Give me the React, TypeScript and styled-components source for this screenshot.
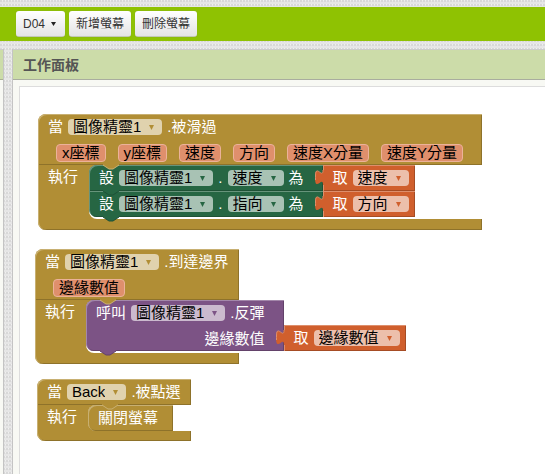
import React from "react";
import styled, { createGlobalStyle, css } from "styled-components";

interface Tone {
  base: string;
  light: string;
  dark: string;
  field: string;
}

const gold: Tone = { base: "#b18e35", light: "#c8b072", dark: "#8e722a", field: "#e0d2ae" };
const green: Tone = { base: "#266643", light: "#67947b", dark: "#1e5236", field: "#a8c2b4" };
const orange: Tone = { base: "#d05f2d", light: "#de8f6c", dark: "#a64c24", field: "#ecbfab" };
const purple: Tone = { base: "#7c5385", light: "#a387aa", dark: "#63426a", field: "#cbbace" };

const GlobalStyle = createGlobalStyle`
  * { box-sizing: border-box; }
  body {
    margin: 0;
    font-family: "Liberation Sans", "Noto Sans CJK TC", sans-serif;
    background-color: #e6e6e6;
    background-image:
      radial-gradient(circle at 1px 1px, #d8d8d8 1px, transparent 1px),
      linear-gradient(#f0f0f0 1px, transparent 1px);
    background-size: 3px 4px, 100% 4px;
  }
`;

const Page = styled.div`
  display: flex;
  flex-direction: column;
  min-height: 100vh;
  padding-top: 7px;
  gap: 8px;
  overflow: hidden;
`;

const Toolbar = styled.header`
  display: flex;
  align-items: center;
  gap: 4px;
  height: 34px;
  padding: 0 16px;
  background: #8fc202;
`;

const ToolButton = styled.button`
  display: flex;
  align-items: center;
  gap: 6px;
  height: 26px;
  padding: 0 7px;
  border: 1px solid #c3c9b4;
  border-width: 0 0 1px;
  border-radius: 3px;
  background: linear-gradient(#ffffff, #e4e4e4);
  box-shadow: 0 0 1px #7d8f4b;
  color: #333;
  font: 12px/16px "Liberation Sans", "Noto Sans CJK TC", sans-serif;
  white-space: nowrap;
`;

const MenuCaret = styled.svg`
  width: 5px;
  height: 4px;
  margin-right: 2px;
  fill: #222;
`;

const Columns = styled.main`
  flex: 1;
  display: flex;
  gap: 8px;
`;

const SidePanel = styled.aside`
  flex: 0 0 4px;
  border-right: 1px solid #c4c4c4;
  background: #f8f9f4;
`;

const SideHeading = styled.div`
  height: 31px;
  border-top: 1px solid #ccc;
  border-bottom: 1px solid #a9b191;
  background: #ccdca9;
`;

const WorkPanel = styled.section`
  flex: 1;
  display: flex;
  flex-direction: column;
  border-left: 1px solid #c4c4c4;
  background: #f8f9f4;
`;

const PanelHeading = styled.h1`
  height: 31px;
  margin: 0;
  padding: 0 10px;
  border-top: 1px solid #ccc;
  border-bottom: 1px solid #a9ad9f;
  background: #ccdca9;
  color: #555;
  font: bold 14px/30px "Liberation Sans", "Noto Sans CJK TC", sans-serif;
`;

const Canvas = styled.div`
  position: relative;
  flex: 1;
  margin: 6px 0 0 6px;
  border: 1px solid #ddd;
  border-width: 1px 0 0 1px;
  background: #fff;
  color: #fff;
  font-size: 15px;
  line-height: 16px;
  white-space: nowrap;
`;

const Placed = styled.div<{ $x: number; $y: number }>`
  position: absolute;
  left: ${(p) => p.$x}px;
  top: ${(p) => p.$y}px;
`;

const Head = styled.div`
  border-radius: 8px 0 0 0;
  background: ${gold.base};
  box-shadow: inset 1px 1px ${gold.light}, inset -1px -1px ${gold.dark};
`;

const Line = styled.div`
  display: flex;
  align-items: center;
  gap: 5px;
  height: 26px;
  padding: 0 10px;
`;

const ParamLine = styled.div`
  display: flex;
  align-items: center;
  gap: 12px;
  height: 25px;
  padding: 0 19px 0 18px;
`;

const Param = styled.span`
  height: 18px;
  padding: 0 5px;
  border: 1px solid #ebb299;
  border-radius: 4px;
  background: #df8f6c;
  color: #000;
`;

/* Statements may reach past the header, so the body adds nothing to the block's width. */
const Body = styled.div`
  display: flex;
  width: 0;
  min-width: 100%;
`;

const Arm = styled.div`
  flex: 0 0 51px;
  padding: 4px 0 0 10px;
  background: ${gold.base};
  box-shadow: inset 1px 0 ${gold.light};
`;

const MouthEdge = styled.div`
  flex: none;
  background: linear-gradient(to right, ${gold.base} 10px, transparent 10px);
`;

const Mouth = styled.div<{ $room: number }>`
  padding-bottom: ${(p) => p.$room}px;
  border-radius: 8px 0 0 8px;
  background: linear-gradient(to right, #fff 12px, transparent 12px);
`;

const Foot = styled.div<{ $height: number }>`
  height: ${(p) => p.$height}px;
  border-radius: 0 0 0 8px;
  background: ${gold.base};
  box-shadow: inset 1px 0 ${gold.light}, inset -1px -1px ${gold.dark};
`;

const StatementRow = styled.div`
  display: flex;
  align-items: flex-end;
`;

const Statement = styled.div<{ $tone: Tone; $first?: boolean; $last?: boolean }>`
  position: relative;
  border-radius: ${(p) => (p.$first ? "8px" : "0")} 0 0 ${(p) => (p.$last ? "8px" : "0")};
  background: ${(p) => p.$tone.base};
  box-shadow: inset 1px 1px ${(p) => p.$tone.light}, inset -1px -1px ${(p) => p.$tone.dark};
`;

const StatementLine = styled(Line)<{ $tail: number }>`
  padding-right: ${(p) => p.$tail}px;
`;

const ArgumentLine = styled(StatementLine)`
  justify-content: flex-end;
  height: 25px;
`;

const Value = styled.div`
  position: relative;
  display: flex;
  align-items: center;
  gap: 5px;
  height: 26px;
  padding: 0 6px 0 10px;
  background: ${orange.base};
  box-shadow: inset 1px 1px ${orange.light}, inset -1px -1px ${orange.dark};
`;

const PlugShape = styled.svg`
  position: absolute;
  left: -8px;
  top: 5px;
  width: 10px;
  height: 16px;
`;

const NotchShape = styled.svg<{ $bottom?: boolean }>`
  position: absolute;
  z-index: 1;
  left: 14px;
  width: 16px;
  height: 6px;
  ${(p) => (p.$bottom ? css`bottom: -5px;` : css`top: -1px;`)}
`;

const FieldBox = styled.label<{ $tone: Tone }>`
  position: relative;
  display: flex;
  height: 16px;
  border-radius: 4px;
  background: ${(p) => p.$tone.field};
  color: ${(p) => p.$tone.base};
`;

const FieldSelect = styled.select`
  appearance: none;
  field-sizing: content;
  height: 16px;
  margin: 0;
  padding: 0 21px 0 5px;
  border: 0;
  background: transparent;
  color: #000;
  font: 15px/16px "Liberation Sans", "Noto Sans CJK TC", sans-serif;
`;

const FieldCaret = styled.svg`
  position: absolute;
  right: 8px;
  top: 6px;
  width: 5px;
  height: 5px;
  fill: currentColor;
  pointer-events: none;
`;

function Dropdown({ value, tone, label }: { value: string; tone: Tone; label: string }) {
  return (
    <FieldBox $tone={tone}>
      <FieldSelect aria-label={label} defaultValue={value}>
        <option>{value}</option>
      </FieldSelect>
      <FieldCaret viewBox="0 0 5 5" aria-hidden="true">
        <path d="M0 0H5L2.5 5Z" />
      </FieldCaret>
    </FieldBox>
  );
}

function Notch({ tone, bottom }: { tone: Tone; bottom?: boolean }) {
  return (
    <NotchShape $bottom={bottom} viewBox="0 0 16 6" aria-hidden="true">
      <path d="M0 0V1L6 5H10L16 1V0Z" fill={tone.base} />
      <path d="M0 1L6 5H10L16 1" fill="none" stroke={bottom ? tone.dark : tone.light} strokeWidth="1" />
    </NotchShape>
  );
}

function Getter({ name }: { name: string }) {
  return (
    <Value>
      <PlugShape viewBox="0 0 10 16" aria-hidden="true">
        <path d="M10 0H8C8 10 0 -8 0 7.5S8 5 8 15H10Z" fill={orange.base} />
        <path d="M8 0C8 10 0 -8 0.5 7.5V10" fill="none" stroke={orange.light} />
      </PlugShape>
      <span>取</span>
      <Dropdown value={name} tone={orange} label="變數" />
    </Value>
  );
}

interface EventProps {
  x: number;
  y: number;
  component: string;
  event: string;
  params?: string[];
  room?: number;
  foot?: number;
  children: React.ReactNode;
}

function EventBlock({ x, y, component, event, params, room = 2, foot = 11, children }: EventProps) {
  return (
    <Placed $x={x} $y={y}>
      <Head>
        <Line>
          <span>當</span>
          <Dropdown value={component} tone={gold} label="元件" />
          <span>.{event}</span>
        </Line>
        {params && (
          <ParamLine>
            {params.map((name) => (
              <Param key={name}>{name}</Param>
            ))}
          </ParamLine>
        )}
      </Head>
      <Body>
        <Arm>執行</Arm>
        <MouthEdge>
          <Mouth $room={room}>{children}</Mouth>
        </MouthEdge>
      </Body>
      <Foot $height={foot} />
    </Placed>
  );
}

interface SetterProps {
  property: string;
  source: string;
  first?: boolean;
  last?: boolean;
}

function Setter({ property, source, first, last }: SetterProps) {
  return (
    <StatementRow>
      <Statement $tone={green} $first={first} $last={last}>
        {first && <Notch tone={gold} />}
        <StatementLine $tail={19}>
          <span>設</span>
          <Dropdown value="圖像精靈1" tone={green} label="元件" />
          <span>.</span>
          <Dropdown value={property} tone={green} label="屬性" />
          <span>為</span>
        </StatementLine>
        <Notch tone={green} bottom />
      </Statement>
      <Getter name={source} />
    </StatementRow>
  );
}

export default function App() {
  return (
    <>
      <GlobalStyle />
      <Page>
        <Toolbar>
          <ToolButton type="button" aria-haspopup="menu">
            D04
            <MenuCaret viewBox="0 0 5 4" aria-hidden="true">
              <path d="M0 0H5L2.5 4Z" />
            </MenuCaret>
          </ToolButton>
          <ToolButton type="button">新增螢幕</ToolButton>
          <ToolButton type="button">刪除螢幕</ToolButton>
        </Toolbar>
        <Columns>
          <SidePanel>
            <SideHeading />
          </SidePanel>
          <WorkPanel>
            <PanelHeading>工作面板</PanelHeading>
            <Canvas>
              <EventBlock
                x={18}
                y={27}
                component="圖像精靈1"
                event="被滑過"
                params={["x座標", "y座標", "速度", "方向", "速度X分量", "速度Y分量"]}
              >
                <Setter property="速度" source="速度" first />
                <Setter property="指向" source="方向" last />
              </EventBlock>
              <EventBlock x={15} y={162} component="圖像精靈1" event="到達邊界" params={["邊緣數值"]}>
                <StatementRow>
                  <Statement $tone={purple} $first $last>
                    <Notch tone={gold} />
                    <StatementLine $tail={19}>
                      <span>呼叫</span>
                      <Dropdown value="圖像精靈1" tone={purple} label="元件" />
                      <span>.反彈</span>
                    </StatementLine>
                    <ArgumentLine $tail={19}>邊緣數值</ArgumentLine>
                    <Notch tone={purple} bottom />
                  </Statement>
                  <Getter name="邊緣數值" />
                </StatementRow>
              </EventBlock>
              <EventBlock x={17} y={292} component="Back" event="被點選" room={0} foot={10}>
                <StatementRow>
                  <Statement $tone={gold} $first $last>
                    <Notch tone={gold} />
                    <StatementLine $tail={15}>關閉螢幕</StatementLine>
                  </Statement>
                </StatementRow>
              </EventBlock>
            </Canvas>
          </WorkPanel>
        </Columns>
      </Page>
    </>
  );
}
